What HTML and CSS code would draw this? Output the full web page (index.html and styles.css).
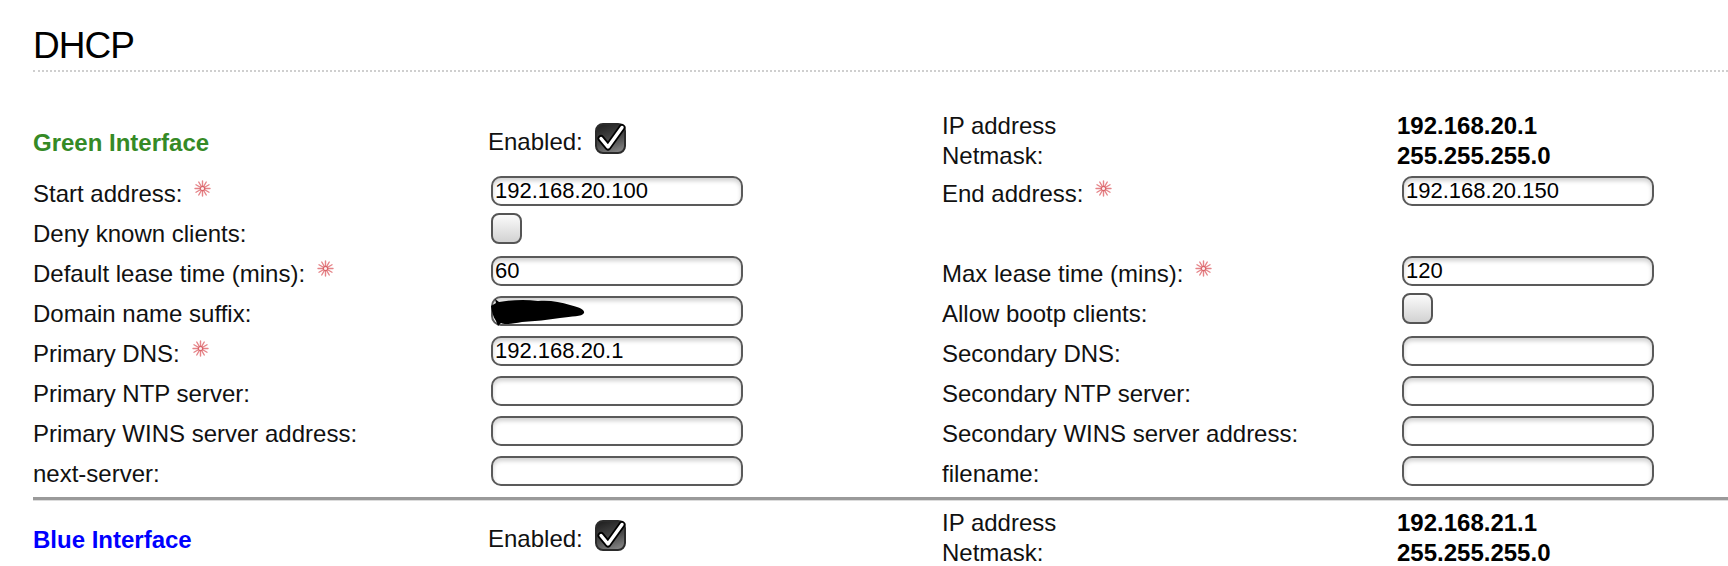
FILE: index.html
```html
<!DOCTYPE html>
<html lang="en">
<head>
  <meta charset="UTF-8" />
  <meta name="viewport" content="width=device-width, initial-scale=1.0"/>
  <title>DHCP</title>
  <link rel="stylesheet" href="styles.css">
</head>
<body>
  <!-- shared glyphs -->
  <svg class="defs" width="0" height="0">
    <symbol id="star" viewBox="0 0 17 17">
      <g stroke="#e3767b" stroke-width="1.4" stroke-linecap="round" opacity="0.9">
        <line x1="1" y1="8.5" x2="16" y2="8.5"/>
        <line x1="2" y1="4.75" x2="15" y2="12.25"/>
        <line x1="4.75" y1="2" x2="12.25" y2="15"/>
        <line x1="8.5" y1="1" x2="8.5" y2="16"/>
        <line x1="12.25" y1="2" x2="4.75" y2="15"/>
        <line x1="15" y1="4.75" x2="2" y2="12.25"/>
      </g>
      <circle cx="8.5" cy="8.5" r="2.2" fill="#fdeeee" stroke="#d9646a" stroke-width="1.2"/>
    </symbol>
    <symbol id="tick" viewBox="0 0 31 31">
      <path d="M6 15.5 L13 24 L27 4.5" fill="none" stroke="#000" stroke-width="7" stroke-linecap="round" stroke-linejoin="round"/>
      <path d="M6 15.5 L13 24 L27 4.5" fill="none" stroke="#fff" stroke-width="3.4" stroke-linecap="round" stroke-linejoin="round"/>
    </symbol>
  </svg>

  <h1>DHCP</h1>

  <!-- Green interface -->
  <div class="section green-section">
    <div class="row head">
      <div class="iface green">Green Interface</div>
      <div class="enabled">Enabled:<span class="check on"><svg><use href="#tick"/></svg></span></div>
      <div class="addr">IP address<br>Netmask:</div>
      <div class="addr val">192.168.20.1<br>255.255.255.0</div>
    </div>

    <div class="row">
      <div class="label">Start address:<svg class="req"><use href="#star"/></svg></div>
      <div class="field"><input class="text" type="text" value="192.168.20.100"></div>
      <div class="label">End address:<svg class="req"><use href="#star"/></svg></div>
      <div class="field"><input class="text" type="text" value="192.168.20.150"></div>
    </div>

    <div class="row">
      <div class="label">Deny known clients:</div>
      <div class="field box"><span class="check"></span></div>
      <div class="label"></div>
      <div class="field"></div>
    </div>

    <div class="row">
      <div class="label">Default lease time (mins):<svg class="req"><use href="#star"/></svg></div>
      <div class="field"><input class="text" type="text" value="60"></div>
      <div class="label">Max lease time (mins):<svg class="req"><use href="#star"/></svg></div>
      <div class="field"><input class="text" type="text" value="120"></div>
    </div>

    <div class="row">
      <div class="label">Domain name suffix:</div>
      <div class="field redacted">
        <input class="text" type="text" value="t">
        <svg class="blot" viewBox="0 0 95 30" width="95" height="30">
          <path d="M1 9 L6 6 L5 2 L9 5 C20 3 35 2 48 4 C60 3 70 5 80 8 C88 10 95 12 94 16 C92 20 82 19 70 21 C58 23 45 24 32 25 C22 27 14 28 11 26 L8 29 L6 24 C3 20 2 15 1 9 Z" fill="#000"/>
        </svg>
      </div>
      <div class="label">Allow bootp clients:</div>
      <div class="field box"><span class="check"></span></div>
    </div>

    <div class="row">
      <div class="label">Primary DNS:<svg class="req"><use href="#star"/></svg></div>
      <div class="field"><input class="text" type="text" value="192.168.20.1"></div>
      <div class="label">Secondary DNS:</div>
      <div class="field"><input class="text" type="text"></div>
    </div>

    <div class="row">
      <div class="label">Primary NTP server:</div>
      <div class="field"><input class="text" type="text"></div>
      <div class="label">Secondary NTP server:</div>
      <div class="field"><input class="text" type="text"></div>
    </div>

    <div class="row">
      <div class="label">Primary WINS server address:</div>
      <div class="field"><input class="text" type="text"></div>
      <div class="label">Secondary WINS server address:</div>
      <div class="field"><input class="text" type="text"></div>
    </div>

    <div class="row">
      <div class="label">next-server:</div>
      <div class="field"><input class="text" type="text"></div>
      <div class="label">filename:</div>
      <div class="field"><input class="text" type="text"></div>
    </div>
  </div>

  <hr class="rule">

  <!-- Blue interface -->
  <div class="section blue-section">
    <div class="row head">
      <div class="iface blue">Blue Interface</div>
      <div class="enabled">Enabled:<span class="check on"><svg><use href="#tick"/></svg></span></div>
      <div class="addr">IP address<br>Netmask:</div>
      <div class="addr val">192.168.21.1<br>255.255.255.0</div>
    </div>
  </div>
</body>
</html>
```

FILE: styles.css
```css
body {
  margin: 0;
  padding: 0 0 0 33px;
  font-family: "Liberation Sans", Arial, sans-serif;
  font-size: 24px;
  color: #111;
  background: #fff;
  overflow: hidden;
}

.defs {
  position: absolute;
  width: 0;
  height: 0;
}

h1 {
  margin: 26px 0 0;
  height: 41px;
  line-height: 40px;
  padding-bottom: 3px;
  font-size: 37px;
  font-weight: normal;
  letter-spacing: -1px;
  color: #000;
  border-bottom: 2px dotted #cfcfcf;
}

.green-section { margin-top: 39px; }
.blue-section { margin-top: 8px; }

.row {
  display: grid;
  grid-template-columns: 453px 456px 455px 1fr;
  height: 40px;
  line-height: 30px;
}

.row.head { height: 62px; }

.iface {
  padding-top: 17px;
  font-weight: bold;
}
.iface.green { color: #358a26; }
.iface.blue { color: #0000ff; }

.enabled {
  padding-top: 12px;
  padding-left: 2px;
}

.addr.val { font-weight: bold; color: #000; }

.label {
  padding-top: 6px;
  white-space: nowrap;
}

.req {
  width: 17px;
  height: 17px;
  margin-left: 12px;
  vertical-align: 5px;
}

.field {
  padding: 2px 0 0 5px;
}
.field.box { padding-top: 0; }

.redacted { position: relative; }

.blot {
  position: absolute;
  left: 4px;
  top: 4px;
}

input.text {
  box-sizing: border-box;
  width: 252px;
  height: 30px;
  margin: 0;
  padding: 0 2px;
  font-family: "Liberation Sans", Arial, sans-serif;
  font-size: 22px;
  color: #000;
  background: #fff;
  border: 2px solid #5a5a5a;
  border-radius: 10px;
  box-shadow: inset 0 3px 4px rgba(0, 0, 0, 0.18);
  outline: none;
}

.check {
  display: inline-block;
  box-sizing: border-box;
  width: 31px;
  height: 31px;
  border: 2px solid #555;
  border-radius: 8px;
  background: linear-gradient(#fbfbfb, #d2d2d2);
}

.enabled .check {
  margin-left: 12px;
  vertical-align: -4px;
}

.check.on {
  border-color: #2b2b2b;
  background: linear-gradient(160deg, #1e1e1e 0%, #4a4a4a 55%, #8c8c8c 100%);
}

.check svg {
  display: block;
  width: 31px;
  height: 31px;
  margin: -2px;
}

.rule {
  margin: 4px 0 0;
  height: 3px;
  border: none;
  background: #9a9a9a;
  box-shadow: 0 1px 0 #dcdcdc;
}
```
